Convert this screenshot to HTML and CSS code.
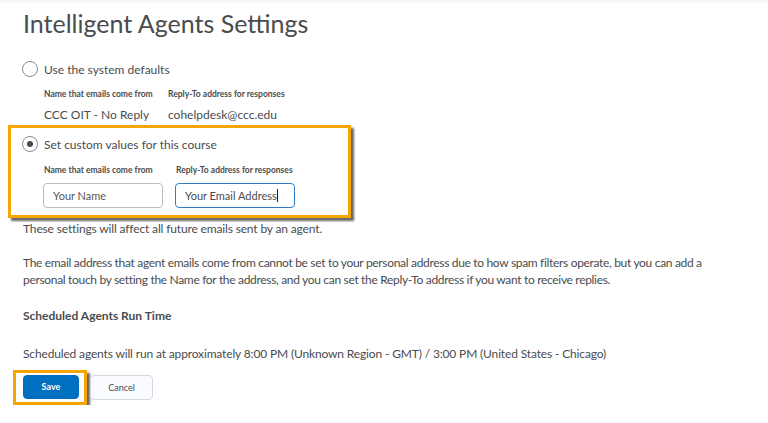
FILE: index.html
```html
<!DOCTYPE html>
<html lang="en">
<head>
    <meta charset="UTF-8">
    <meta name="viewport" content="width=device-width, initial-scale=1.0">
    <title>Intelligent Agents Settings</title>
    <link rel="stylesheet" href="styles.css">
</head>
<body>
    <div class="topbar"></div>
    <div class="page">
        <h1 class="title">Intelligent Agents Settings</h1>

        <label class="radio-row">
            <span class="radio"></span>
            <span>Use the system defaults</span>
        </label>
        <div class="defaults">
            <div class="small-label">Name that emails come from</div>
            <div class="small-label">Reply-To address for responses</div>
            <div class="value">CCC OIT - No Reply</div>
            <div class="value">cohelpdesk@ccc.edu</div>
        </div>

        <div class="highlight custom">
            <label class="radio-row">
                <span class="radio checked"></span>
                <span>Set custom values for this course</span>
            </label>
            <div class="custom-fields">
                <div class="small-label">Name that emails come from</div>
                <div class="small-label">Reply-To address for responses</div>
                <div class="field">Your Name</div>
                <div class="field focused">Your Email Address<span class="caret"></span></div>
            </div>
        </div>

        <p class="note">These settings will affect all future emails sent by an agent.</p>
        <p class="note long">The email address that agent emails come from cannot be set to your personal address due to how spam filters operate, but you can add a personal touch by setting the Name for the address, and you can set the Reply-To address if you want to receive replies.</p>

        <h2 class="section">Scheduled Agents Run Time</h2>
        <p class="note run">Scheduled agents will run at approximately 8:00 PM (Unknown Region - GMT) / 3:00 PM (United States - Chicago)</p>

        <div class="actions">
            <div class="highlight save-wrap">
                <button class="btn primary">Save</button>
            </div>
            <button class="btn">Cancel</button>
        </div>
    </div>
</body>
</html>
```

FILE: styles.css
```css
* {
    margin: 0;
    padding: 0;
    box-sizing: border-box;
}

body {
    background: #ffffff;
    font-family: Lato, "Open Sans", sans-serif;
    color: #494c4e;
}

.topbar {
    height: 3px;
    background: #f7f7f8;
}

.page {
    padding: 0 23px;
}

.title {
    margin-top: 4px;
    font-size: 25px;
    line-height: 32px;
    font-weight: 400;
    color: #494c4e;
}

.radio-row {
    display: flex;
    align-items: center;
    gap: 6px;
    height: 18px;
    margin-top: 21px;
    margin-left: -1px;
    font-size: 12px;
}

.radio {
    width: 16px;
    height: 16px;
    border: 1px solid #868c8f;
    border-radius: 50%;
    display: flex;
    align-items: center;
    justify-content: center;
}

.radio.checked::after {
    content: "";
    width: 6px;
    height: 6px;
    border-radius: 50%;
    background: #494c4e;
}

.defaults {
    display: grid;
    grid-template-columns: 124px auto;
    margin: 10px 0 0 21px;
    row-gap: 6px;
}

.small-label {
    font-size: 8.5px;
    line-height: 12px;
    font-weight: 700;
    color: #494c4e;
}

.value {
    font-size: 12px;
    line-height: 18px;
}

.highlight {
    border: 3px solid #f7a600;
    box-shadow: 3px 3px 2px rgba(0, 0, 0, 0.6);
}

.custom {
    width: 343px;
    margin: 1px 0 0 -15px;
    padding: 7px 0 7px 11px;
}

.custom .radio-row {
    margin-top: 0;
    margin-left: 0;
}

.custom-fields {
    display: grid;
    grid-template-columns: 120px 120px;
    column-gap: 12px;
    row-gap: 7px;
    margin: 11px 0 0 21px;
}

.custom-fields .small-label {
    margin-left: 1px;
}

.field {
    height: 25px;
    border: 1px solid #b7bec5;
    border-radius: 4px;
    padding: 0 9px;
    font-size: 11px;
    line-height: 23px;
    color: #565a5c;
}

.field.focused {
    border-color: #2f7fc6;
    color: #494c4e;
}

.caret {
    display: inline-block;
    width: 1px;
    height: 13px;
    background: #202122;
    vertical-align: -2px;
}

.note {
    font-size: 12px;
    line-height: 17px;
    letter-spacing: -0.15px;
    color: #494c4e;
}

.custom + .note {
    margin-top: 2px;
}

.note.long {
    margin-top: 17px;
    max-width: 735px;
    letter-spacing: -0.32px;
}

.section {
    margin-top: 19px;
    font-size: 12px;
    line-height: 17px;
    font-weight: 700;
}

.note.run {
    margin-top: 21px;
}

.actions {
    display: flex;
    align-items: center;
    margin: 8px 0 0 -10px;
}

.save-wrap {
    padding: 1px 5px 3px 7px;
}

.btn {
    height: 25px;
    padding: 0 16px;
    border: 1px solid #d3d9e3;
    border-radius: 4px;
    background: #f9fbff;
    color: #494c4e;
    font-family: Lato, "Open Sans", sans-serif;
    font-size: 9px;
    font-weight: 700;
    cursor: pointer;
}

.btn.primary {
    width: 56px;
    height: 24px;
    padding: 0;
    border-color: #006fbf;
    background: #006fbf;
    color: #ffffff;
}

.actions > .btn {
    width: 63px;
    margin-left: 3px;
    font-weight: 400;
}
```
